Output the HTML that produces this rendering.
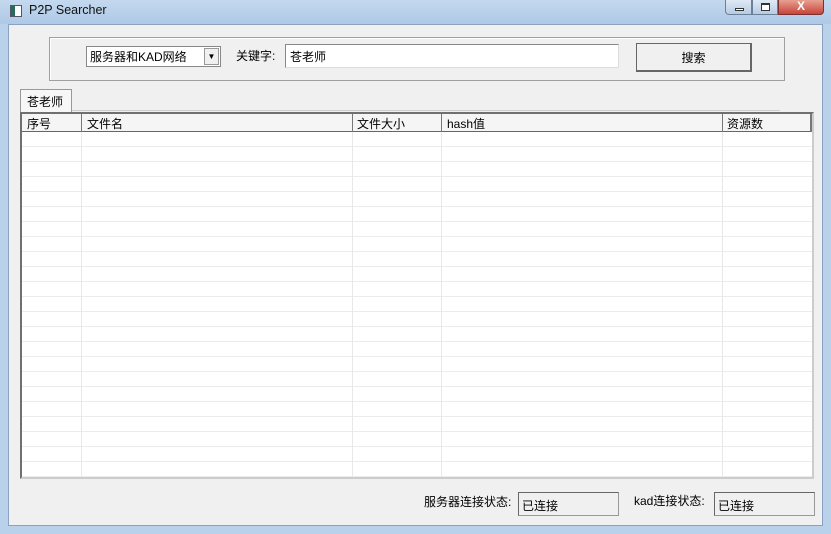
<!DOCTYPE html><html><head><meta charset="utf-8"><style>
*{margin:0;padding:0;box-sizing:border-box}
body{width:831px;height:534px;overflow:hidden;background:#b9d1ea;font-family:"Liberation Sans","Noto Sans CJK SC",sans-serif;font-size:12px;color:#000;position:relative}
.a{position:absolute}
.title{left:0;top:0;width:831px;height:24px;background:linear-gradient(#c4d9ef,#aec8e6)}
.client{left:8px;top:24px;width:815px;height:502px;background:#f0f0f0;border:1px solid #8aa2bf}
.rows{background-image:repeating-linear-gradient(to bottom,transparent 0 14px,#ececec 14px 15px)}
</style></head><body>
<div class="a title"></div>
<div class="a" style="left:10px;top:5px;width:12px;height:12px;border:1px solid #556;background:linear-gradient(90deg,#2a6a5a 0 4px,#fff 4px)"></div>
<div class="a" style="left:29px;top:3px;font-size:12.5px;color:#111">P2P Searcher</div>
<div class="a" style="left:725px;top:0;width:27px;height:15px;border:1px solid #6a7f99;border-top:none;border-radius:0 0 0 4px;background:linear-gradient(#dfe9f5,#b8cbe2)"><div class="a" style="left:9px;top:8px;width:9px;height:3px;border:1px solid #333;background:#fff"></div></div>
<div class="a" style="left:752px;top:0;width:26px;height:15px;border:1px solid #6a7f99;border-top:none;background:linear-gradient(#dfe9f5,#b8cbe2)"><div class="a" style="left:8px;top:3px;width:9px;height:8px;border:1px solid #333;border-top-width:2px;background:#fff"></div></div>
<div class="a" style="left:778px;top:0;width:46px;height:15px;border:1px solid #7a3030;border-top:none;border-radius:0 0 4px 0;background:linear-gradient(#e8a090,#c8443a);color:#fff;font-weight:bold;text-align:center;font-size:12px;line-height:12px">X</div>
<div class="a client"></div>
<div class="a" style="left:49px;top:37px;width:736px;height:44px;border:1px solid #a0a0a0;box-shadow:inset 1px 1px 0 #fff"></div>
<div class="a" style="left:86px;top:46px;width:135px;height:21px;border:1px solid #888;background:#fff;font-size:12px;line-height:21px;padding-left:3px">服务器和KAD网络</div>
<div class="a" style="left:204px;top:48px;width:15px;height:17px;background:#f0f0f0;border:1px solid #999;font-size:8px;text-align:center;line-height:16px">▼</div>
<div class="a" style="left:236px;top:47px">关键字:</div>
<div class="a" style="left:285px;top:44px;width:334px;height:24px;border:1px solid #888;border-right-color:#ddd;border-bottom-color:#ddd;background:#fff;padding:3px 4px">苍老师</div>
<div class="a" style="left:636px;top:43px;width:116px;height:29px;border:1px solid #666;border-right-width:2px;border-bottom-width:2px;background:#f0f0f0;text-align:center;line-height:29px">搜索</div>
<div class="a" style="left:20px;top:89px;width:52px;height:23px;border:1px solid #999;border-bottom:none;background:#f7f7f7;padding:3px 6px">苍老师</div>
<div class="a" style="left:72px;top:110px;width:708px;height:1px;background:#ccc"></div>
<div class="a" style="left:20px;top:112px;width:794px;height:367px;border:2px solid #707070;border-right-color:#ccc;border-bottom-color:#ccc;background:#fff"></div>
<div class="a rows" style="left:22px;top:132px;width:790px;height:345px"></div>
<div class="a" style="left:22px;top:114px;width:790px;height:18px;background:#f5f5f5;border-bottom:1px solid #666"></div>
<div class="a" style="left:81px;top:114px;width:1px;height:363px;background:#e8e8e8"></div>
<div class="a" style="left:352px;top:114px;width:1px;height:363px;background:#e8e8e8"></div>
<div class="a" style="left:441px;top:114px;width:1px;height:363px;background:#e8e8e8"></div>
<div class="a" style="left:722px;top:114px;width:1px;height:363px;background:#e8e8e8"></div>
<div class="a" style="left:81px;top:114px;width:1px;height:18px;background:#777"></div>
<div class="a" style="left:352px;top:114px;width:1px;height:18px;background:#777"></div>
<div class="a" style="left:441px;top:114px;width:1px;height:18px;background:#777"></div>
<div class="a" style="left:722px;top:114px;width:1px;height:18px;background:#777"></div>
<div class="a" style="left:810px;top:114px;width:2px;height:18px;background:#777"></div>
<div class="a" style="left:27px;top:115px">序号</div>
<div class="a" style="left:87px;top:115px">文件名</div>
<div class="a" style="left:357px;top:115px">文件大小</div>
<div class="a" style="left:447px;top:115px">hash值</div>
<div class="a" style="left:727px;top:115px">资源数</div>
<div class="a" style="left:424px;top:493px">服务器连接状态:</div>
<div class="a" style="left:518px;top:492px;width:101px;height:24px;border:1px solid #999;border-left-color:#666;border-top-color:#666;padding:4px 3px">已连接</div>
<div class="a" style="left:634px;top:492px">kad连接状态:</div>
<div class="a" style="left:714px;top:492px;width:101px;height:24px;border:1px solid #999;border-left-color:#666;border-top-color:#666;padding:4px 3px">已连接</div>
</body></html>
